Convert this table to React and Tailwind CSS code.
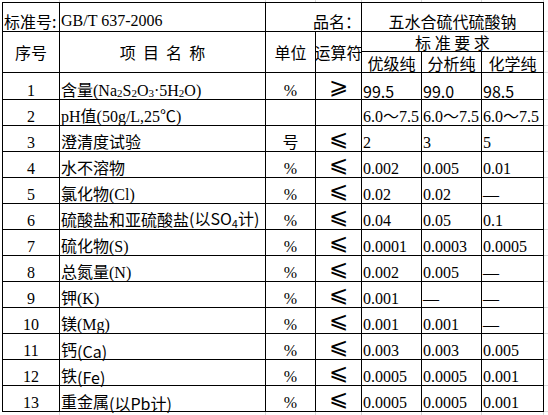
import React from "react";

const serif = "font-['Liberation_Serif','Noto_Sans_CJK_SC',serif]";
const song = "font-['Noto_Sans_CJK_SC',sans-serif]";

const cell = "border-r border-b border-black flex whitespace-nowrap leading-none";

function Sub({ children }) {
  return <span className="text-[11px] align-[-3px]">{children}</span>;
}

const rows = [
  { no: "1", name: <>含量(Na<Sub>2</Sub>S<Sub>2</Sub>O<Sub>3</Sub>·5H<Sub>2</Sub>O)</>, unit: "%", op: "⩾", vals: ["99.5", "99.0", "98.5"], sansVals: true },
  { no: "2", name: <>pH值(50g/L,25℃)</>, unit: "", op: "", vals: ["6.0～7.5", "6.0～7.5", "6.0～7.5"] },
  { no: "3", name: <>澄清度试验</>, unit: "号", op: "⩽", vals: ["2", "3", "5"] },
  { no: "4", name: <>水不溶物</>, unit: "%", op: "⩽", vals: ["0.002", "0.005", "0.01"] },
  { no: "5", name: <>氯化物(Cl)</>, unit: "%", op: "⩽", vals: ["0.02", "0.02", "—"] },
  { no: "6", name: <>硫酸盐和亚硫酸盐<span className={song}>(以SO<Sub>4</Sub>计)</span></>, unit: "%", op: "⩽", vals: ["0.04", "0.05", "0.1"] },
  { no: "7", name: <>硫化物(S)</>, unit: "%", op: "⩽", vals: ["0.0001", "0.0003", "0.0005"] },
  { no: "8", name: <>总氮量(N)</>, unit: "%", op: "⩽", vals: ["0.002", "0.005", "—"] },
  { no: "9", name: <>钾(K)</>, unit: "%", op: "⩽", vals: ["0.001", "—", "—"] },
  { no: "10", name: <>镁(Mg)</>, unit: "%", op: "⩽", vals: ["0.001", "0.001", "—"] },
  { no: "11", name: <>钙<span className={song}>(Ca)</span></>, unit: "%", op: "⩽", vals: ["0.003", "0.003", "0.005"] },
  { no: "12", name: <>铁<span className={song}>(Fe)</span></>, unit: "%", op: "⩽", vals: ["0.0005", "0.0005", "0.001"] },
  { no: "13", name: <>重金属<span className={song}>(以Pb计)</span></>, unit: "%", op: "⩽", vals: ["0.0005", "0.0005", "0.001"] },
];

// faint excel gridlines around the table
function GridStrip({ h }) {
  return (
    <div className={`flex ${h}`}>
      <div className="w-[3px]"></div>
      <div className="w-[57px] border-r border-[#d9d9d9]"></div>
      <div className="w-[206px] border-r border-[#d9d9d9]"></div>
      <div className="w-[50px] border-r border-[#d9d9d9]"></div>
      <div className="w-[46px] border-r border-[#d9d9d9]"></div>
      <div className="w-[60px] border-r border-[#d9d9d9]"></div>
      <div className="w-[60px] border-r border-[#d9d9d9]"></div>
      <div className="w-[62px] border-r border-[#d9d9d9]"></div>
    </div>
  );
}

export default function App() {
  return (
    <div className={`w-[548px] h-[415px] bg-white text-black text-[16px] overflow-hidden flex flex-col ${serif}`}>
      <GridStrip h="h-[2px]" />

      <div className="flex">
        <div className="w-[2px]"></div>

        {/* table */}
        <div className="grid grid-cols-[57px_206px_50px_46px_60px_60px_62px] grid-rows-[29px_20px_21px_27px_repeat(12,26px)] border-l border-t border-black">
          {/* title row */}
          <div className={`${cell} items-end pb-[2px] pl-[1px] ${song}`}>标准号:</div>
          <div className={`${cell} items-end pb-[2px] pl-[1px]`}>GB/T 637-2006</div>
          <div className={`${cell} col-span-2 items-end justify-end pb-[2px] ${song}`}>品名：</div>
          <div className={`${cell} col-span-3 items-end justify-center pb-[2px] ${song}`}>五水合硫代硫酸钠</div>

          {/* header */}
          <div className={`${cell} row-span-2 items-center justify-center ${song}`}>序号</div>
          <div className={`${cell} row-span-2 items-center justify-center whitespace-pre ${song}`}>项  目  名  称</div>
          <div className={`${cell} row-span-2 items-center justify-center ${song}`}>单位</div>
          <div className={`${cell} row-span-2 items-center justify-center overflow-hidden ${song}`}>运算符</div>
          <div className={`${cell} col-span-3 items-center justify-center whitespace-pre ${song}`}>标 准 要 求</div>
          <div className={`${cell} items-center justify-center pt-[1px] ${song}`}>优级纯</div>
          <div className={`${cell} items-center justify-center pt-[1px] ${song}`}>分析纯</div>
          <div className={`${cell} items-center justify-center pt-[1px] ${song}`}>化学纯</div>

          {/* body */}
          {rows.map((r) => (
            <React.Fragment key={r.no}>
              <div className={`${cell} items-end justify-center`}>{r.no}</div>
              <div className={`${cell} items-end pl-[1px]`}>{r.name}</div>
              <div className={`${cell} items-end justify-center`}>{r.unit}</div>
              <div className={`${cell} items-end justify-center pb-[1px] text-[23px] font-extralight font-['DejaVu_Sans_ExtraLight','DejaVu_Sans',sans-serif]`}>{r.op}</div>
              {r.vals.map((v, i) => (
                <div key={i} className={`${cell} items-end pl-[1px] ${r.sansVals ? song : ""}`}>{v}</div>
              ))}
            </React.Fragment>
          ))}
        </div>

        {/* right strip gridlines */}
        <div className="w-[4px] pt-[1px] grid grid-rows-[29px_20px_21px_27px_repeat(12,26px)]">
          {Array.from({ length: 16 }).map((_, i) => (
            <div key={i} className="border-b border-[#d9d9d9]"></div>
          ))}
        </div>
      </div>

      <GridStrip h="h-[3px]" />
    </div>
  );
}
